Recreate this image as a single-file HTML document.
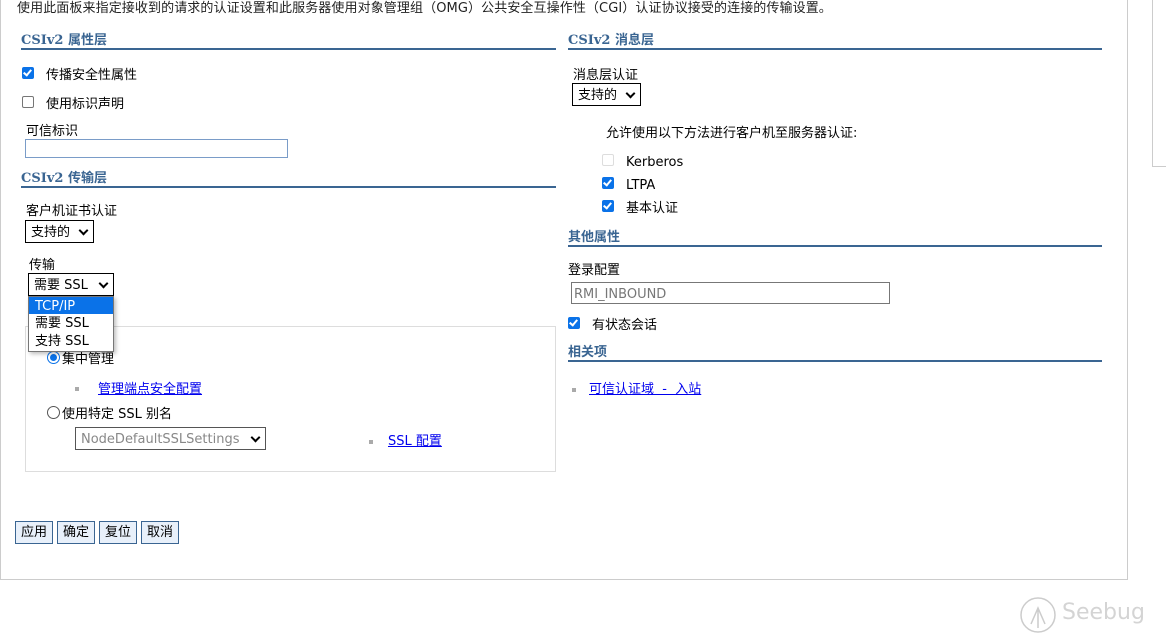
<!DOCTYPE html>
<html><head><meta charset="utf-8"><style>
body{margin:0;width:1166px;height:642px;background:#fff;position:relative;overflow:hidden;font-family:"DejaVu Sans","Noto Sans CJK SC",sans-serif;font-size:13px;color:#000}
.a{position:absolute;white-space:nowrap;line-height:21px}
.h{position:absolute;font-weight:bold;color:#3a6592;font-size:13px;font-family:"DejaVu Serif","Noto Sans CJK SC",serif;border-bottom:2px solid #3a6592;height:17px;line-height:20px}
.cb{position:absolute;width:12px;height:12px;border-radius:2px;box-sizing:border-box}
.on{background:#0a72e8}
.on::after{content:"";position:absolute;left:3px;top:1px;width:3px;height:6px;border:solid #fff;border-width:0 2px 2px 0;transform:rotate(40deg)}
.off{border:1px solid #767676;background:#fff}
.sel{position:absolute;border:1px solid #000;box-sizing:border-box;height:23px;padding:3px 5px;line-height:17px}
.sel::after{content:"";position:absolute;right:6px;top:6px;width:5px;height:5px;border:solid #000;border-width:0 2px 2px 0;transform:rotate(45deg)}
a{color:#00e;text-decoration:underline}
.btn{position:absolute;top:521px;height:23px;width:38px;border:1px solid #3a6592;background:#e8f0fa;box-sizing:border-box;text-align:center;line-height:22px}
.bul{position:absolute;width:4px;height:4px;background:#aaa}
</style></head><body>
<div class="a" style="left:0;top:0;width:1px;height:580px;background:#ccc"></div>
<div class="a" style="left:1127px;top:0;width:1px;height:580px;background:#ccc"></div>
<div class="a" style="left:0;top:579px;width:1128px;height:1px;background:#ccc"></div>
<div class="a" style="left:1152px;top:0;width:1px;height:166px;background:#ccc"></div>
<div class="a" style="left:1152px;top:166px;width:14px;height:1px;background:#ccc"></div>

<div class="a" style="left:17px;top:-2px;color:#222;letter-spacing:0.1px">使用此面板来指定接收到的请求的认证设置和此服务器使用对象管理组（OMG）公共安全互操作性（CGI）认证协议接受的连接的传输设置。</div>

<div class="h" style="left:21px;top:31px;width:535px">CSIv2 属性层</div>
<div class="cb on" style="left:22px;top:67px"></div><div class="a" style="left:46px;top:65px">传播安全性属性</div>
<div class="cb off" style="left:22px;top:96px"></div><div class="a" style="left:46px;top:94px">使用标识声明</div>
<div class="a" style="left:26px;top:121px">可信标识</div>
<div class="a" style="left:25px;top:139px;width:263px;height:19px;border:1px solid #7a9cc8;box-sizing:border-box"></div>

<div class="h" style="left:21px;top:169px;width:535px">CSIv2 传输层</div>
<div class="a" style="left:26px;top:201px">客户机证书认证</div>
<div class="sel" style="left:25px;top:220px;width:69px">支持的</div>
<div class="a" style="left:29px;top:255px">传输</div>
<div class="sel" style="left:28px;top:273px;width:86px">需要 SSL</div>

<div class="a" style="left:25px;top:326px;width:531px;height:146px;border:1px solid #ddd;box-sizing:border-box"></div>
<div class="a" style="left:47px;top:351px;width:13px;height:13px;border:1px solid #0a72e8;border-radius:50%;box-sizing:border-box"><div style="position:absolute;left:2px;top:2px;width:7px;height:7px;border-radius:50%;background:#0a72e8"></div></div>
<div class="a" style="left:62px;top:349px">集中管理</div>
<div class="bul" style="left:75px;top:387px"></div><a class="a" style="left:98px;top:379px">管理端点安全配置</a>
<div class="a" style="left:47px;top:406px;width:13px;height:13px;border:1px solid #555;border-radius:50%;box-sizing:border-box"></div>
<div class="a" style="left:62px;top:404px">使用特定 SSL 别名</div>
<div class="sel" style="left:75px;top:427px;width:191px;border-color:#555;color:#888">NodeDefaultSSLSettings</div>
<div class="bul" style="left:369px;top:440px"></div><a class="a" style="left:388px;top:431px">SSL 配置</a>

<div class="a" style="left:28px;top:296px;width:86px;height:56px;border:1px solid #777;box-sizing:border-box;background:#fff;box-shadow:2px 2px 4px rgba(0,0,0,.25);line-height:18px">
<div style="background:#0a72e8;color:#fff;height:17px;line-height:19px;padding-left:6px">TCP/IP</div>
<div style="height:18px;line-height:19px;padding-left:6px">需要 SSL</div>
<div style="height:18px;line-height:19px;padding-left:6px">支持 SSL</div></div>

<div class="btn" style="left:15px">应用</div>
<div class="btn" style="left:57px">确定</div>
<div class="btn" style="left:99px">复位</div>
<div class="btn" style="left:141px">取消</div>

<div class="h" style="left:568px;top:31px;width:534px">CSIv2 消息层</div>
<div class="a" style="left:573px;top:65px">消息层认证</div>
<div class="sel" style="left:572px;top:83px;width:69px">支持的</div>
<div class="a" style="left:606px;top:123px">允许使用以下方法进行客户机至服务器认证:</div>
<div class="cb off" style="left:602px;top:154px;border-color:#ddd"></div><div class="a" style="left:626px;top:152px">Kerberos</div>
<div class="cb on" style="left:602px;top:177px"></div><div class="a" style="left:626px;top:175px">LTPA</div>
<div class="cb on" style="left:602px;top:200px"></div><div class="a" style="left:626px;top:198px">基本认证</div>
<div class="h" style="left:568px;top:228px;width:534px">其他属性</div>
<div class="a" style="left:568px;top:260px">登录配置</div>
<div class="a" style="left:571px;top:282px;width:319px;height:22px;border:1px solid #777;box-sizing:border-box;color:#777;padding:2px 2px;line-height:19px">RMI_INBOUND</div>
<div class="cb on" style="left:568px;top:317px"></div><div class="a" style="left:592px;top:315px">有状态会话</div>
<div class="h" style="left:568px;top:343px;width:534px">相关项</div>
<div class="bul" style="left:572px;top:388px"></div><a class="a" style="left:589px;top:379px">可信认证域 &nbsp;-&nbsp; 入站</a>

<svg class="a" style="left:1018px;top:594px" width="44" height="44"><circle cx="20" cy="21" r="17" fill="none" stroke="#ccc" stroke-width="1.5"/><path d="M13 30 L20 14 L27 30 M20 14 L20 34" fill="none" stroke="#ccc" stroke-width="1.5"/></svg>
<div class="a" style="left:1062px;top:600px;font-size:22px;line-height:26px;color:#d4d4d4">Seebug</div>
</body></html>
